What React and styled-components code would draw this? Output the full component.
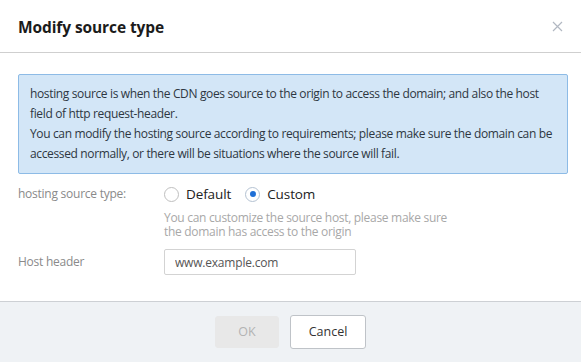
import React, { useState } from 'react';
import styled, { createGlobalStyle } from 'styled-components';

const GlobalStyle = createGlobalStyle`
    html, body {
        margin: 0;
        padding: 0;
        background: #ffffff;
    }
    body {
        font-family: 'Open Sans', 'Noto Sans', sans-serif;
        color: #333;
    }
`

const Modal = styled.section`
    width: 581px;
    height: 362px;
    display: flex;
    flex-direction: column;
    background: #fff;
    overflow: hidden;
`

const Header = styled.header`
    height: 52px;
    border-bottom: 1px solid #cfcfcf;
    display: flex;
    align-items: center;
    justify-content: space-between;
    padding: 0 14px 0 18px;
    .title {
        margin: 2px 0 0;
        font-weight: 700;
        font-size: 15.5px;
        letter-spacing: -0.1px;
        color: #1b1b1b;
    }
`

const CloseBtn = styled.button`
    width: 20px;
    height: 20px;
    border: 0;
    background: none;
    padding: 0;
    display: flex;
    align-items: center;
    justify-content: center;
    cursor: pointer;
`

const Body = styled.div`
    flex: 1;
    padding: 21px 13px 0 18px;
`

const Notice = styled.div`
    border: 1px solid #8dbbe6;
    border-radius: 2px;
    background: #d3e6f7;
    padding: 9px 11px;
    font-size: 12px;
    line-height: 20px;
    letter-spacing: -0.36px;
    color: #2e3742;
`

const FormRow = styled.div`
    display: flex;
    align-items: center;
    margin-top: ${props => props.$gap}px;
`

const FieldLabel = styled.label`
    width: 146px;
    flex-shrink: 0;
    font-size: 12px;
    letter-spacing: -0.25px;
    color: #8a8a8a;
    line-height: 20px;
`

const RadioGroup = styled.div`
    display: flex;
    align-items: center;
    gap: 14px;
`

const RadioItem = styled.label`
    display: flex;
    align-items: center;
    gap: 7px;
    font-size: 13.5px;
    letter-spacing: -0.1px;
    color: #222;
    line-height: 20px;
    cursor: pointer;
    .circle {
        width: 13px;
        height: 13px;
        border-radius: 50%;
        border: 1px solid ${props => props.$checked ? '#b4c2d2' : '#bfbfbf'};
        background: #fff;
        display: flex;
        align-items: center;
        justify-content: center;
    }
    .dot {
        width: 6px;
        height: 6px;
        border-radius: 50%;
        background: #1f6fd6;
    }
`

const Hint = styled.p`
    margin: 7px 0 0 146px;
    width: 292px;
    font-size: 12px;
    line-height: 14px;
    letter-spacing: -0.3px;
    color: #a8a8a8;
`

const TextInput = styled.input`
    box-sizing: border-box;
    width: 192px;
    height: 26px;
    border: 1px solid #d3d3d3;
    border-radius: 2px;
    padding: 0 10px;
    font-family: inherit;
    font-size: 12px;
    letter-spacing: -0.2px;
    color: #555;
    outline: none;
`

const Footer = styled.footer`
    height: 61px;
    border-top: 1px solid #cdd0d4;
    background: #eff2f5;
    display: flex;
    align-items: center;
    justify-content: center;
    gap: 11px;
    box-sizing: border-box;
    padding-bottom: 1px;
`

const Btn = styled.button`
    box-sizing: border-box;
    height: ${props => props.$primary ? 32 : 34}px;
    min-width: ${props => props.$primary ? 64 : 76}px;
    border-radius: 3px;
    font-family: inherit;
    font-size: 12.5px;
    border: 1px solid ${props => props.$primary ? '#e8e8e8' : '#bfc3c8'};
    background: ${props => props.$primary ? '#e8e8e8' : '#fff'};
    color: ${props => props.$primary ? '#b3b3b3' : '#333'};
    cursor: ${props => props.$primary ? 'not-allowed' : 'pointer'};
`

function App() {
    const [type, setType] = useState('custom')
    const [host, setHost] = useState('www.example.com')

    return (
        <>
            <GlobalStyle />
            <Modal>
                <Header>
                    <h2 className='title'>Modify source type</h2>
                    <CloseBtn aria-label='close'>
                        <svg width='11' height='11' viewBox='0 0 11 11'>
                            <path d='M1 1 L10 10 M10 1 L1 10' stroke='#b2b8c2' strokeWidth='1.2' />
                        </svg>
                    </CloseBtn>
                </Header>
                <Body>
                    <Notice>
                        hosting source is when the CDN goes source to the origin to access the domain; and also the host field of http request-header.
                        <br />
                        You can modify the hosting source according to requirements; please make sure the domain can be accessed normally, or there will be situations where the source will fail.
                    </Notice>
                    <FormRow $gap={10}>
                        <FieldLabel>hosting source type:</FieldLabel>
                        <RadioGroup>
                            <RadioItem $checked={type === 'default'} onClick={() => setType('default')}>
                                <span className='circle'>{type === 'default' && <span className='dot' />}</span>
                                Default
                            </RadioItem>
                            <RadioItem $checked={type === 'custom'} onClick={() => setType('custom')}>
                                <span className='circle'>{type === 'custom' && <span className='dot' />}</span>
                                Custom
                            </RadioItem>
                        </RadioGroup>
                    </FormRow>
                    <Hint>You can customize the source host, please make sure the domain has access to the origin</Hint>
                    <FormRow $gap={10}>
                        <FieldLabel>Host header</FieldLabel>
                        <TextInput value={host} onChange={e => setHost(e.target.value)} />
                    </FormRow>
                </Body>
                <Footer>
                    <Btn $primary disabled>OK</Btn>
                    <Btn>Cancel</Btn>
                </Footer>
            </Modal>
        </>
    )
}

export default App;
